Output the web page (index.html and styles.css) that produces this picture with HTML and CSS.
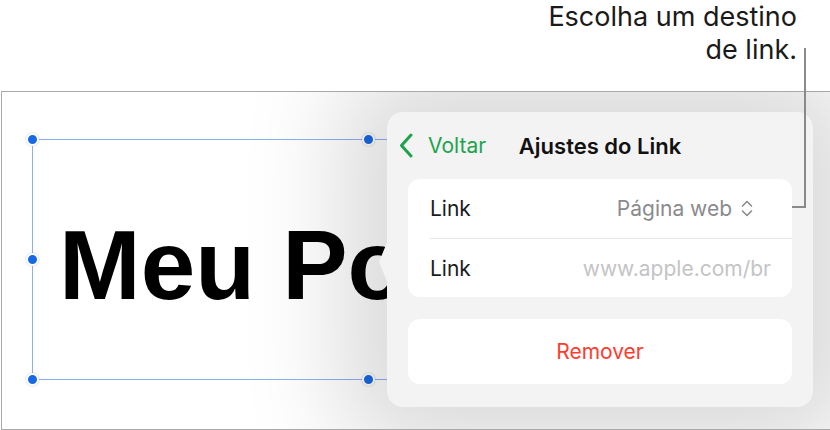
FILE: index.html
```html
<!DOCTYPE html>
<html lang="pt-BR">
<head>
    <meta charset="UTF-8">
    <meta name="viewport" content="width=device-width, initial-scale=1.0">
    <title>Ajustes do Link</title>
    <link rel="stylesheet" href="styles.css">
</head>
<body>
    <div class="page">
        <header class="callout">
            <p class="callout-text">Escolha um destino<br>de link.</p>
        </header>
        <span class="callout-leader"></span>

        <main class="canvas">
            <div class="selection">
                <span class="handle top-left"></span>
                <span class="handle top-mid"></span>
                <span class="handle mid-left"></span>
                <span class="handle bottom-left"></span>
                <span class="handle bottom-mid"></span>
                <h1 class="slide-title">Meu Po</h1>
            </div>

            <section class="popover">
                <div class="popover-header">
                    <a class="back" href="#">
                        <svg class="back-icon" width="14" height="25" viewBox="0 0 14 25">
                            <path d="M12 2 L2.5 12.5 L12 23" fill="none" stroke="currentColor" stroke-width="3" stroke-linecap="round" stroke-linejoin="round"/>
                        </svg>
                        <span>Voltar</span>
                    </a>
                    <h2 class="popover-title">Ajustes do Link</h2>
                    <span></span>
                </div>

                <div class="group">
                    <div class="row">
                        <span class="row-label">Link</span>
                        <span class="row-value select">
                            Página web
                            <svg width="12" height="17" viewBox="0 0 12 17">
                                <path d="M1.5 6 L6 1.5 L10.5 6 M1.5 11 L6 15.5 L10.5 11" fill="none" stroke="currentColor" stroke-width="1.6" stroke-linecap="round" stroke-linejoin="round"/>
                            </svg>
                        </span>
                    </div>
                    <div class="row">
                        <span class="row-label">Link</span>
                        <span class="row-value placeholder">www.apple.com/br</span>
                    </div>
                </div>

                <div class="group">
                    <button class="remove">Remover</button>
                </div>
            </section>
        </main>
    </div>
</body>
</html>
```

FILE: styles.css
```css
body {
    margin: 0;
    background: #fff;
    font-family: Inter, "Noto Sans", sans-serif;
    color: #1c1c1e;
    overflow: hidden;
}
.page {
    position: relative;
    width: 830px;
    height: 430px;
}
.callout {
    height: 91px;
    padding-right: 33px;
    box-sizing: border-box;
}
.callout-text {
    margin: 0;
    text-align: right;
    font-size: 27px;
    line-height: 33px;
    color: #1a1a1a;
}
.callout-leader {
    position: absolute;
    left: 792px;
    top: 48px;
    width: 12px;
    height: 158px;
    border-right: 2px solid #8a8a8a;
    border-bottom: 2px solid #8a8a8a;
    z-index: 3;
}
.canvas {
    position: relative;
    height: 337px;
    margin-left: 1px;
    border: 1px solid #a9a9a9;
    border-right: none;
    overflow: hidden;
    background: #fff;
}
.selection {
    position: absolute;
    left: 30px;
    top: 47px;
    width: 672px;
    height: 239px;
    border: 1px solid #8fb0ef;
    display: flex;
    align-items: center;
}
.slide-title {
    margin: 11px 0 0 26px;
    font-family: "Liberation Sans", Arial, sans-serif;
    font-weight: bold;
    font-size: 98px;
    white-space: nowrap;
    color: #000;
}
.handle {
    position: absolute;
    width: 9px;
    height: 9px;
    border-radius: 50%;
    background: #1769e3;
    border: 2px solid #fff;
    box-shadow: 0 0 2px rgba(0, 0, 0, 0.25);
    margin: -7px 0 0 -7px;
}
.top-left { left: 0; top: 0; }
.top-mid { left: 336px; top: 0; }
.mid-left { left: 0; top: 120px; }
.bottom-left { left: 0; top: 240px; }
.bottom-mid { left: 336px; top: 240px; }
.popover {
    position: absolute;
    left: 385px;
    top: 20px;
    width: 426px;
    height: 295px;
    box-sizing: border-box;
    padding: 0 21px 23px;
    background: #f3f3f3;
    border-radius: 16px;
    box-shadow: 0 0 100px 45px rgba(0, 0, 0, 0.15);
    display: flex;
    flex-direction: column;
    gap: 22px;
}
.popover::before {
    content: "";
    position: absolute;
    left: -8px;
    top: 128px;
    border-top: 22px solid transparent;
    border-bottom: 22px solid transparent;
    border-right: 9px solid #f3f3f3;
}
.popover-header {
    height: 67px;
    margin: 0 -21px -22px;
    display: grid;
    grid-template-columns: 1fr auto 1fr;
    align-items: center;
}
.back {
    display: flex;
    align-items: center;
    gap: 15px;
    padding-left: 12px;
    color: #1ea34d;
    text-decoration: none;
    font-size: 21px;
}
.popover-title {
    margin: 0;
    font-size: 22px;
    font-weight: 600;
    color: #111;
}
.group {
    background: #fff;
    border-radius: 12px;
}
.row {
    height: 59px;
    margin-left: 22px;
    padding-right: 21px;
    display: flex;
    align-items: center;
    justify-content: space-between;
    font-size: 21px;
}
.row + .row {
    border-top: 1px solid #e6e6e6;
    height: 58px;
}
.select {
    display: flex;
    align-items: center;
    gap: 9px;
    margin-right: 18px;
    color: #8a8a8e;
}
.placeholder {
    color: #c4c4c6;
}
.remove {
    width: 100%;
    height: 65px;
    border: none;
    background: none;
    font-family: inherit;
    font-size: 21px;
    color: #ff3b30;
    cursor: pointer;
}
```
